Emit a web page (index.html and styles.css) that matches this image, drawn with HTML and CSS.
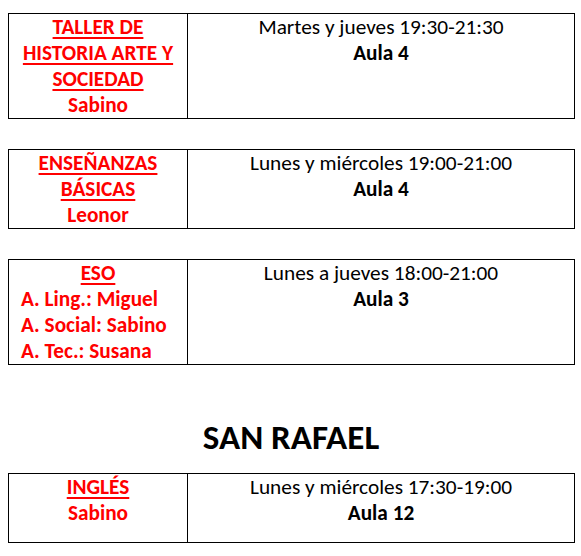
FILE: index.html
```html
<!DOCTYPE html>
<html lang="es">
<head>
<meta charset="utf-8">
<link rel="stylesheet" href="styles.css">
<title>Horarios</title>
</head>
<body>
<table class="grid first">
  <tr>
    <td class="who">
      <span class="title">TALLER DE<br>HISTORIA ARTE Y<br>SOCIEDAD</span><br>
      <span class="name">Sabino</span>
    </td>
    <td class="when">
      <div>Martes y jueves 19:30-21:30</div>
      <div class="room">Aula 4</div>
    </td>
  </tr>
</table>

<table class="grid">
  <tr>
    <td class="who">
      <span class="title">ENSEÑANZAS<br>BÁSICAS</span><br>
      <span class="name">Leonor</span>
    </td>
    <td class="when">
      <div>Lunes y miércoles 19:00-21:00</div>
      <div class="room">Aula 4</div>
    </td>
  </tr>
</table>

<table class="grid">
  <tr>
    <td class="who">
      <span class="title">ESO</span>
      <div class="list">
        <div>A. Ling.: Miguel</div>
        <div>A. Social: Sabino</div>
        <div>A. Tec.: Susana</div>
      </div>
    </td>
    <td class="when">
      <div>Lunes a jueves 18:00-21:00</div>
      <div class="room">Aula 3</div>
    </td>
  </tr>
</table>

<h1 class="heading">SAN RAFAEL</h1>

<table class="grid last">
  <tr>
    <td class="who">
      <span class="title">INGLÉS</span><br>
      <span class="name">Sabino</span>
    </td>
    <td class="when">
      <div>Lunes y miércoles 17:30-19:00</div>
      <div class="room">Aula 12</div>
    </td>
  </tr>
</table>
</body>
</html>
```

FILE: styles.css
```css
html, body {
  background: #ffffff;
}
body {
  margin: 0;
  padding: 13px 7px 0 8px;
  font-family: "Carlito", "Lato", sans-serif;
  font-size: 21.3px;
  line-height: 26px;
  color: #000000;
}
.grid {
  width: 567px;
  border-collapse: collapse;
  table-layout: fixed;
  margin: 0 0 30px 0;
}
.grid td {
  border: 1px solid #000000;
  padding: 0;
  vertical-align: top;
  text-align: center;
  white-space: nowrap;
}
.grid td.who {
  width: 178px;
  color: #ff0000;
  font-weight: bold;
}
.title {
  text-decoration: underline;
  text-decoration-thickness: 2px;
  text-underline-offset: 3px;
}
.list {
  text-align: left;
  padding-left: 12px;
}
.room {
  font-weight: bold;
}
.heading {
  margin: 52px 0 16px 0;
  font-size: 35px;
  line-height: 40px;
  text-align: center;
  font-weight: bold;
}
.last td {
  height: 68px;
}
```
